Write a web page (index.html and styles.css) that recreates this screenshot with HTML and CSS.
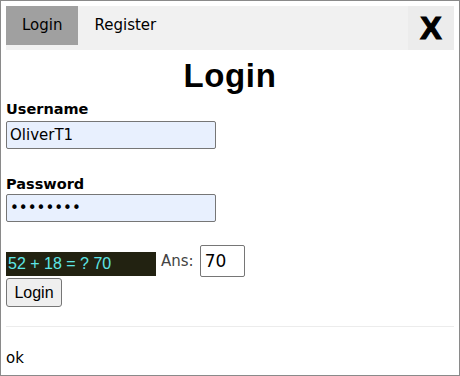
FILE: index.html
```html
<!DOCTYPE html>
<html>
<head>
<meta charset="utf-8">
<link rel="stylesheet" href="styles.css">
</head>
<body>
<div class="frame">
  <nav class="tabs">
    <span class="tab active">Login</span>
    <span class="tab">Register</span>
    <span class="close">X</span>
  </nav>
  <h1 class="title">Login</h1>
  <label class="label user-label">Username</label>
  <input class="field" type="text" value="OliverT1">
  <label class="label pass-label">Password</label>
  <input class="field" type="password" value="abcdefgh">
  <div class="captcha-row">
    <span class="captcha">52 + 18 = ? 70</span>
    <span class="ans">Ans:</span>
    <input class="ans-field" type="text" value="70">
  </div>
  <button class="submit">Login</button>
  <hr class="rule">
  <div class="status">ok</div>
</div>
</body>
</html>
```
FILE: styles.css
```css
html, body {
  margin: 0;
  padding: 0;
  background: #fff;
}
.frame {
  box-sizing: border-box;
  width: 460px;
  height: 376px;
  border: 1px solid #8a8a8a;
  padding: 5px;
  font-family: "DejaVu Sans", Verdana, sans-serif;
  font-size: 15px;
  color: #000;
}
.tabs {
  display: flex;
  align-items: flex-start;
  height: 44px;
  background: #f1f1f1;
}
.tab {
  height: 39px;
  line-height: 39px;
  padding: 0 16px;
  box-sizing: border-box;
}
.tab.active {
  background: #a0a0a0;
}
.close {
  margin-left: auto;
  width: 46px;
  height: 44px;
  display: flex;
  align-items: center;
  justify-content: center;
  background: #ececec;
  font-family: "Liberation Sans", Arial, sans-serif;
  font-weight: bold;
  font-size: 32px;
  -webkit-text-stroke: 1.2px #000;
}
.title {
  margin: 6px 0 0;
  text-align: center;
  font-family: "Liberation Sans", Arial, sans-serif;
  font-weight: bold;
  font-size: 33px;
  letter-spacing: 0.6px;
  line-height: 40px;
}
.label {
  display: block;
  font-weight: bold;
  font-size: 14.5px;
  line-height: 18px;
}
.user-label {
  margin: 4px 0 3px;
}
.pass-label {
  margin: 26px 0 1px;
}
.field {
  display: block;
  box-sizing: border-box;
  width: 210px;
  height: 28px;
  margin: 0;
  padding: 0 3px;
  border: 1px solid #767676;
  border-radius: 2px;
  background: #e8f0fe;
  font-family: "DejaVu Sans", Verdana, sans-serif;
  font-size: 15px;
  color: #000;
}
.captcha-row {
  display: flex;
  align-items: flex-start;
  margin-top: 23px;
}
.captcha {
  margin-top: 7px;
  width: 150px;
  height: 24px;
  line-height: 24px;
  box-sizing: border-box;
  padding-left: 2px;
  background: #222211;
  color: #5ee6e6;
  font-family: "Liberation Sans", Arial, sans-serif;
  font-size: 16px;
}
.ans {
  margin: 7px 0 0 5px;
  line-height: 18px;
  font-size: 15px;
  color: #444;
}
.ans-field {
  margin: 0 0 0 6px;
  box-sizing: border-box;
  width: 45px;
  height: 32px;
  padding: 0 4px;
  border: 1px solid #767676;
  border-radius: 2px;
  background: #fff;
  font-family: "DejaVu Sans", Verdana, sans-serif;
  font-size: 17px;
  color: #000;
}
.submit {
  display: block;
  margin: 1px 0 0;
  box-sizing: border-box;
  width: 56px;
  height: 29px;
  padding: 0;
  border: 1px solid #767676;
  border-radius: 3px;
  background: #efefef;
  font-family: "Liberation Sans", Arial, sans-serif;
  font-size: 16px;
  color: #000;
}
.rule {
  margin: 19px 0 0;
  border: 0;
  border-top: 1px solid #ececec;
  height: 0;
}
.status {
  margin-top: 22px;
  line-height: 18px;
}
```
